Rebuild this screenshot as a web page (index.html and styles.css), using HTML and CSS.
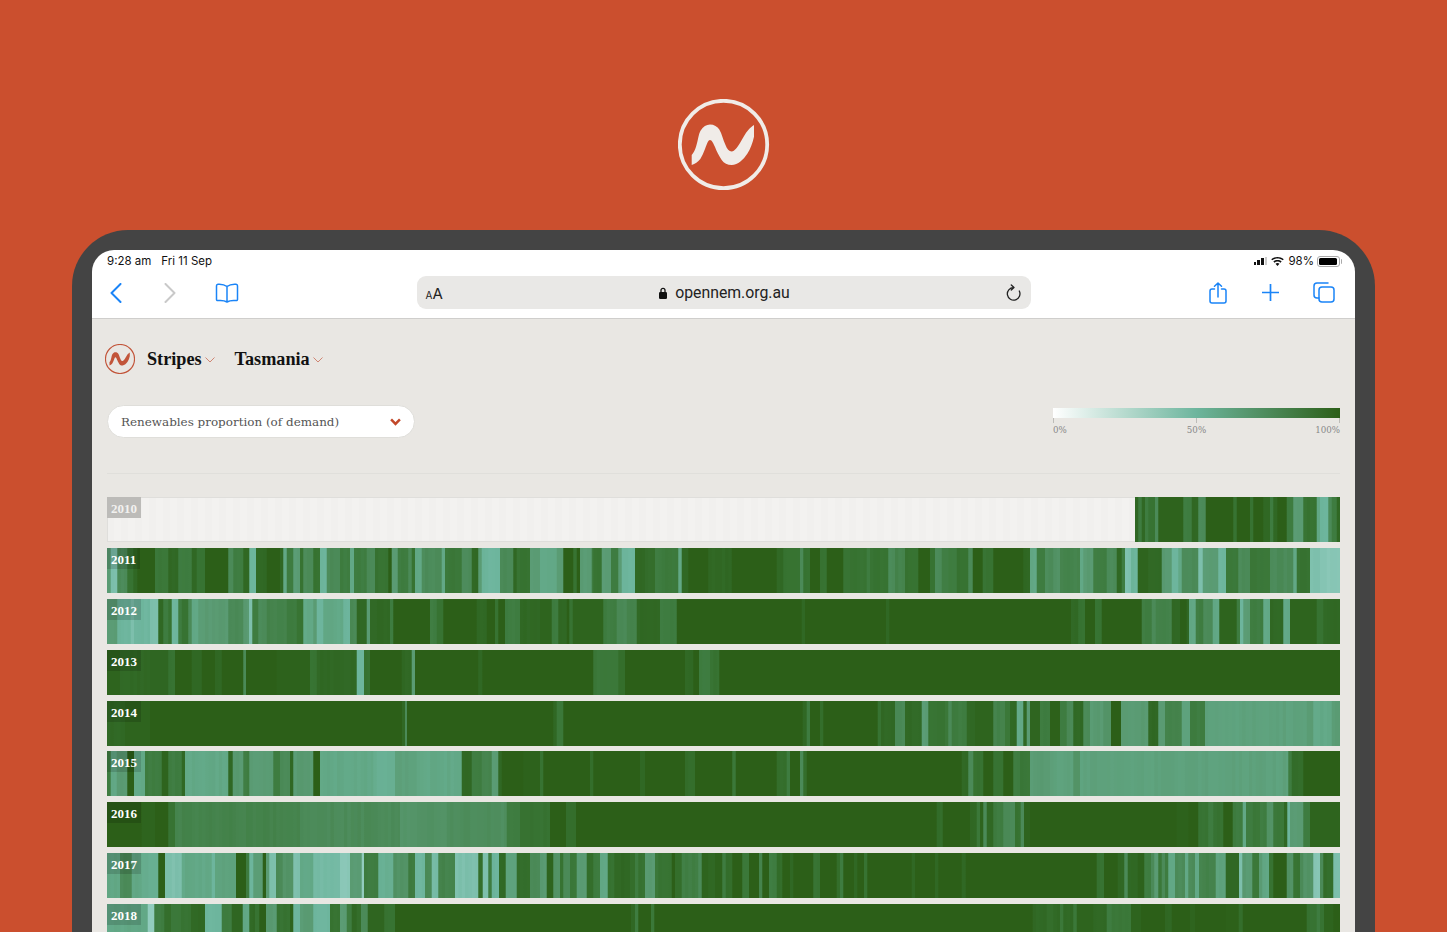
FILE: index.html
```html
<!DOCTYPE html>
<html lang="en">
<head>
<meta charset="utf-8">
<title>OpenNEM Stripes</title>
<link rel="stylesheet" href="styles.css">
</head>
<body>
<div class="hero">
  <svg class="hero-logo" viewBox="0 0 92 92" aria-hidden="true">
    <circle class="ring" cx="45.5" cy="45.5" r="43.7"/>
    <path class="wave" d="M13.7 56C16 53.5 17 50.5 18 47.7 20 42 20.500 35 22.500 31.700 25 27.500 28.500 25.500 32 25.500 36 25.500 39.500 27.500 41.300 30.500 44 35 45 41 47.500 46 49 50 51 52.500 53.700 52.500 56.500 52.500 59.500 48 62 44 65 39 67.500 34 70.300 31 72 29 74 27 76 26V37.700C74.500 44 72.500 50 69.300 54.800 65.500 60.500 60 66 53.700 66 49.500 66 46 64.500 43.700 61 41 57 38.500 52 37 48 35.500 44.500 33.800 41 32 41 30 41 28.500 46 27 50 25.500 54 24 57 22.300 60 20 63 17 65 13.700 66Z"/>
  </svg>
</div>
<div class="device">
  <div class="screen">
    <div class="status">
      <div class="status-left"><span>9:28 am</span><span>Fri 11 Sep</span></div>
      <div class="status-right">
        <span class="signal"><i></i><i></i><i></i><i></i></span>
        <svg class="wifi" viewBox="0 0 14 10" aria-hidden="true"><path d="M7 10 4.800 7.600C6.100 6.500 7.900 6.500 9.200 7.600ZM3.600 6.300 2.400 5C5 2.800 9 2.800 11.600 5L10.400 6.300C8.500 4.700 5.500 4.700 3.600 6.300ZM1.200 3.700 0 2.400C4-.8 10-.8 14 2.400L12.800 3.700C9.500 1.100 4.500 1.100 1.200 3.700Z"/></svg>
        <span>98%</span>
        <span class="battery"><b></b></span>
      </div>
    </div>
    <div class="toolbar">
      <div class="tools">
        <svg class="ico ico-nav" viewBox="0 0 12 20" aria-hidden="true"><path d="M10.500 1 1.500 10l9 9"/></svg>
        <svg class="ico ico-nav off" viewBox="0 0 12 20" aria-hidden="true"><path d="M1.500 1l9 9-9 9"/></svg>
        <svg class="ico ico-book" viewBox="0 0 24 20" aria-hidden="true"><path d="M12 3.500C9.500 1.500 6 1 3 1.200 2 1.300 1.500 1.800 1.500 2.800V16.500C1.500 17.300 2 17.700 3 17.600 6 17.300 9.500 17.500 12 19 14.500 17.500 18 17.300 21 17.600 22 17.700 22.500 17.300 22.500 16.500V2.800C22.500 1.800 22 1.300 21 1.200 18 1 14.500 1.500 12 3.500ZM12 3.500V19"/></svg>
      </div>
      <div class="address">
        <span class="aa"><small>A</small>A</span>
        <span class="url">
          <svg class="lock" viewBox="0 0 8 12" aria-hidden="true"><path class="shackle" d="M2 5.500V3.300a2 2 0 0 1 4 0V5.500"/><rect y="5" width="8" height="7" rx="1.300"/></svg>
          opennem.org.au
        </span>
        <svg class="reload" viewBox="0 0 16 18" aria-hidden="true"><path d="M13.300 7A6.300 6.300 0 1 1 7.500 3.500M5.300 1 8 3.500 5.300 6"/></svg>
      </div>
      <div class="tools tools-right">
        <svg class="ico ico-share" viewBox="0 0 18 22" aria-hidden="true"><path d="M5.500 7H3C1.800 7 1 7.800 1 9V19C1 20.200 1.800 21 3 21H15C16.200 21 17 20.200 17 19V9C17 7.800 16.200 7 15 7H12.500M9 15V1M5.500 4.300 9 1l3.500 3.300"/></svg>
        <svg class="ico ico-plus" viewBox="0 0 17 17" aria-hidden="true"><path d="M8.500 0V17M0 8.500H17"/></svg>
        <svg class="ico ico-tabs" viewBox="0 0 22 21" aria-hidden="true"><path d="M15 1H4C2 1 1 2 1 4V13C1 15 2 16 4 16H6"/><rect x="6" y="5" width="15" height="15" rx="3"/></svg>
      </div>
    </div>
    <main class="app">
      <header class="app-head">
        <svg class="app-logo" viewBox="0 0 92 92" aria-hidden="true">
          <circle class="ring" cx="46" cy="46" r="44.500"/>
          <path class="wave" d="M13.700 56C16 53.500 17 50.500 18 47.700 20 42 20.500 35 22.500 31.700 25 27.500 28.500 25.500 32 25.500 36 25.500 39.500 27.500 41.300 30.500 44 35 45 41 47.500 46 49 50 51 52.500 53.700 52.500 56.500 52.500 59.500 48 62 44 65 39 67.500 34 70.300 31 72 29 74 27 76 26V37.700C74.500 44 72.500 50 69.300 54.800 65.500 60.500 60 66 53.700 66 49.500 66 46 64.500 43.700 61 41 57 38.500 52 37 48 35.500 44.500 33.800 41 32 41 30 41 28.500 46 27 50 25.500 54 24 57 22.300 60 20 63 17 65 13.700 66Z"/>
        </svg>
        <nav class="crumbs">
          <span class="crumb">Stripes<svg viewBox="0 0 10 6" aria-hidden="true"><path d="M.5.500 5 5 9.500.500"/></svg></span>
          <span class="crumb">Tasmania<svg viewBox="0 0 10 6" aria-hidden="true"><path d="M.5.500 5 5 9.500.500"/></svg></span>
        </nav>
      </header>
      <section class="controls">
        <div class="select">
          <span>Renewables proportion (of demand)</span>
          <svg viewBox="0 0 10 7" aria-hidden="true"><path d="M1 1.200 5 5.200 9 1.200"/></svg>
        </div>
        <div class="legend">
          <div class="legend-bar"></div>
          <div class="legend-ticks"><i></i><i></i><i></i></div>
          <div class="legend-labels"><span>0%</span><span>50%</span><span>100%</span></div>
        </div>
      </section>
      <hr class="rule">
      <section class="years">
        <div class="year empty" data-year="2010"><div class="stripes"></div><span class="tag">2010</span></div>
        <div class="year" data-year="2011"><div class="stripes"></div><span class="tag">2011</span></div>
        <div class="year" data-year="2012"><div class="stripes"></div><span class="tag">2012</span></div>
        <div class="year" data-year="2013"><div class="stripes"></div><span class="tag">2013</span></div>
        <div class="year" data-year="2014"><div class="stripes"></div><span class="tag">2014</span></div>
        <div class="year" data-year="2015"><div class="stripes"></div><span class="tag">2015</span></div>
        <div class="year" data-year="2016"><div class="stripes"></div><span class="tag">2016</span></div>
        <div class="year" data-year="2017"><div class="stripes"></div><span class="tag">2017</span></div>
        <div class="year" data-year="2018"><div class="stripes"></div><span class="tag">2018</span></div>
      </section>
    </main>
  </div>
</div>
<script src="stripes.js"></script>
</body>
</html>
```
FILE: styles.css
```css
* { box-sizing: border-box; }
html, body { margin: 0; height: 932px; overflow: hidden; }
body { background: #cb4f2e; font-family: "Inter", "Liberation Sans", sans-serif; color: #111; }

.hero { height: 230px; padding-top: 99px; display: flex; justify-content: center; align-items: flex-start; }
.hero-logo { width: 92px; height: 92px; display: block; }
.hero-logo .ring { fill: none; stroke: #f0ece8; stroke-width: 3.8; }
.hero-logo .wave { fill: #f0ece8; }

.device { margin: 0 72px; height: 702px; padding: 20px 20px 0; background: #444; border-radius: 56px 56px 0 0; }
.screen { height: 100%; background: #fff; border-radius: 22px 22px 0 0; overflow: hidden; display: flex; flex-direction: column; }

.status { height: 22px; padding: 0 15px; flex: none; display: flex; justify-content: space-between; align-items: center; font-size: 11.5px; line-height: 22px; }
.status-left { display: flex; gap: 10px; }
.status-right { display: flex; align-items: center; gap: 3px; }
.signal { display: flex; align-items: flex-end; gap: 1px; height: 8px; margin-right: 1px; }
.signal i { width: 2.7px; background: #111; }
.signal i:nth-child(1) { height: 3px; }
.signal i:nth-child(2) { height: 5px; }
.signal i:nth-child(3) { height: 7px; }
.signal i:nth-child(4) { height: 8px; background: #ccc; }
.wifi { width: 13px; height: 9px; margin-right: 1px; fill: #111; }
.battery { width: 23px; height: 11px; margin-left: 0; padding: 1px; border: 1px solid #aaa; border-radius: 3px; position: relative; display: block; }
.battery b { display: block; width: 95%; height: 100%; background: #000; border-radius: 1.5px; }
.battery::after { content: ""; position: absolute; right: -3px; top: 2px; width: 1.5px; height: 5px; background: #aaa; border-radius: 0 1px 1px 0; }

.toolbar { height: 47px; flex: none; padding: 4px 15px 0; display: grid; grid-template-columns: 1fr 614px 1fr; align-items: start; border-bottom: 1px solid #cfcecc; }
.tools { display: flex; align-items: center; height: 33px; }
.tools-right { justify-content: flex-end; padding-right: 5px; }
.ico { display: block; fill: none; stroke: #1a84f7; stroke-width: 1.7; stroke-linecap: round; stroke-linejoin: round; }
.ico-nav { width: 12px; height: 20px; margin-left: 3px; margin-right: 39px; stroke-width: 2; }
.ico-nav.off { stroke: #c9c9c9; margin-left: 3px; }
.ico-book { width: 24px; height: 20px; margin-left: 0; stroke-width: 1.5; }
.ico-share { width: 18px; height: 22px; margin-right: 35px; stroke-width: 1.5; }
.ico-plus { width: 17px; height: 17px; margin-right: 34px; }
.ico-tabs { width: 22px; height: 21px; stroke-width: 1.5; }

.address { height: 33px; background: #e9e8e6; border-radius: 9px; padding: 0 9px; display: grid; grid-template-columns: 1fr auto 1fr; align-items: center; color: #222; }
.aa { font-size: 15px; line-height: 1; padding-top: 1px; }
.aa small { font-size: 10px; }
.url { display: flex; align-items: center; gap: 8px; padding-left: 2px; font-family: "Roboto", "Liberation Sans", sans-serif; font-size: 15.8px; }
.lock { width: 8px; height: 12px; fill: #111; }
.lock .shackle { fill: none; stroke: #111; stroke-width: 1.3; }
.reload { width: 16px; height: 18px; justify-self: end; fill: none; stroke: #222; stroke-width: 1.3; stroke-linecap: round; stroke-linejoin: round; }

.app { flex: 1; background: #e9e7e3; padding: 25px 15px 0; overflow: hidden; }
.app-head { display: flex; align-items: center; margin-left: -2px; height: 30px; }
.app-logo { width: 30px; height: 30px; }
.app-logo .ring { fill: none; stroke: #c2553a; stroke-width: 3.5; }
.app-logo .wave { fill: #c2553a; }
.crumbs { display: flex; gap: 20px; margin-left: 12px; }
.crumb { display: flex; align-items: center; gap: 3px; font-family: "Liberation Serif", serif; font-weight: 700; font-size: 18.2px; color: #111; }
.crumb svg { width: 10px; height: 6px; margin-top: 2px; fill: none; stroke: #cf8572; stroke-width: 1; }

.controls { display: flex; justify-content: space-between; align-items: flex-start; margin-top: 31px; }
.select { width: 308px; height: 33px; padding: 0 13px; background: #fff; border: 1px solid #dfdeda; border-radius: 17px; display: flex; justify-content: space-between; align-items: center; font-family: "DejaVu Serif", serif; font-size: 11.95px; color: #555; }
.select svg { width: 11px; height: 8px; fill: none; stroke: #c2482a; stroke-width: 2.3; }
.legend { width: 287px; padding-top: 3px; }
.legend-bar { height: 10px; background: linear-gradient(90deg, #fff 0%, #6db59d 50%, #2c5f18 100%); }
.legend-ticks { height: 5px; display: flex; justify-content: space-between; }
.legend-ticks i { width: 1px; background: #bdbcb8; }
.legend-labels { margin-top: 2px; display: grid; grid-template-columns: 1fr auto 1fr; font-family: "DejaVu Serif", serif; font-size: 8.7px; line-height: 10px; color: #888; }
.legend-labels span:last-child { text-align: right; }

.rule { height: 1px; border: 0; margin: 35px 0 23px; background: #e0dfdb; }

.years { display: flex; flex-direction: column; gap: 5.9px; margin-right: .5px; }
.year { height: 45px; flex: none; position: relative; overflow: hidden; background: repeating-linear-gradient(90deg, #f1f0ee 0 7px, #f3f2f0 7px 14px); }
.year.empty { box-shadow: inset 0 0 0 1px #dfdedb; }
.stripes { position: absolute; inset: 0; filter: blur(.5px); }
.tag { position: absolute; left: 0; top: 0; padding: 0 4px; height: 21px; line-height: 23px; background: rgba(0, 0, 0, .14); color: #fff; font-family: "Liberation Serif", serif; font-weight: 700; font-size: 13px; }
.empty .tag { background: #bcbbb8; color: #f2f1ef; }
```
FILE: stripes.js
```js
// Daily colour levels per year: "end:level" tokens in 1/3 px, each chunk relative to a screen-x origin.
var DATA = {
  2010: [[1040, "285:-1 295:1 305:3 315:1 325:3 345:2 355:4 430:.4 455:3 475:1 497:4 580:0 590:2 630:0 640:2 670:0 690:1 700:3 712:1 740:0 760:3 790:5 830:2 840:6 865:7 875:4 890:3 898:1"]],
  2011: [[100, "32:5 52:8 82:4 100:2 112:1 165:0 205:2.5 235:1 275:3 290:1 315:2 385:0 400:4 430:3 448:1 468:7 500:1 540:0 550:1 560:6 580:3 600:5 610:2 640:4 660:2 680:7 720:4 750:3 762:6 800:3 825:4 865:2 875:0 893:5 925:3 935:4 945:2 965:6 1025:4 1035:6 1085:2.5 1115:4 1135:1 1145:5 1200:7 1240:4 1250:1 1290:2 1320:5"],
         [530, "80:6 100:5 130:0 140:2 150:0 185:5 190:3 215:2 243:5 265:3 275:5 315:7 345:1 375:1.5 395:3 445:2.7 455:6 475:1 535:0 605:1 740:0 760:1 810:2 820:4 840:2 870:0 890:2 940:0 1010:2 1020:3 1075:2 1095:4 1125:3.5 1165:2 1200:0"],
         [930, "15:2 35:4 80:3 115:2 128:4 158:0 190:2 280:0 300:1 320:6 345:3 370:4 390:4.5 450:3.5 460:6 490:5 530:3 560:4 575:1 585:3 603:8 623:7 655:.5 695:1 725:5 745:7 755:6 805:4 818:8 865:5 888:7 925:2.5 960:4 1020:2.5 1090:4 1100:6 1140:2 1170:8 1228:8.5"]],
  2012: [[100, "52:5 92:7 102:8 150:7 175:8 190:1 205:3 215:2 235:7 245:3 265:2 275:4 295:6 385:5 430:4 447:5 457:8 475:3 500:4 560:3.5 590:3 610:2 640:6 650:5 670:7 730:6 750:7 770:4 800:1 810:5 870:1 880:3 990:0 1010:3 1030:2 1130:0 1160:1 1185:0 1195:2 1215:0 1260:3 1320:1"],
         [530, "65:.5 85:3 110:1 118:0 128:2 220:.5 260:3 290:4 320:3.5 390:1 440:3 815:0 825:1 1068:0 1078:1 1200:0"],
         [930, "423:0 445:1 465:2 495:0 515:2 635:0 665:3 677:4 725:3.5 750:1 770:0 777:1 797:6 820:3 848:4 868:6 920:.5 930:3 940:7 960:5 1000:3 1020:6 1060:1 1080:6 1160:.5 1180:2 1228:1"]],
  2013: [[100, "60:.5 150:1 205:.8 225:2 275:0 305:1 345:0 365:1 430:0 438:4 530:0 630:.3 650:2 770:1 792:7 810:2 905:0 935:1 945:5 1135:0 1147:1 1320:0"],
         [530, "190:0 265:2.5 285:1.5 465:0 490:1 507:0 540:3 568:2 1200:0"],
         [930, "1228:0"]],
  2014: [[100, "75:1 150:.5 906:0 915:1 921:4 1320:0"],
         [530, "70:0 80:1 100:2.5 818:0 830:1 840:3 870:0 880:1.5 1043:0 1053:2 1095:1 1125:4 1145:1 1175:1.2 1195:5 1200:2"],
         [930, "45:2 55:2.5 65:4 110:3 135:1 190:.5 225:3.5 240:2.5 260:1 280:6 290:1 300:5 330:.7 360:3 390:.2 410:3 430:4 460:1 480:4 520:5 543:4.5 573:0 655:5 685:1 705:5 755:3.5 780:5.5 825:3 1130:5.5 1150:5 1205:6 1228:5"]],
  2015: [[100, "32:3 50:6 82:5 102:0 135:6 185:3 205:.5 245:3 255:1 385:6 398:1 430:5 448:3 520:5 540:3 570:4 580:1 640:5 660:0 820:6 885:6.5 950:5.5 1085:6 1115:1 1145:3 1175:3.5 1195:5 1205:1 1270:0 1320:.3"],
         [530, "40:2 180:0 190:1.5 330:0 345:1 465:0 495:1.5 607:0 617:2.5 740:0 770:1.5 780:3 810:0 820:4 830:1.5 1200:0"],
         [930, "95:0 115:1 130:4 160:2 190:0 220:2 250:0 270:3 300:2.5 360:5 430:5.5 450:4.5 1075:5.5 1085:3 1120:1.5 1228:0"]],
  2016: [[100, "125:0 165:.5 205:0 225:2 600:3.5 900:4 1040:4.5 1220:4.2 1260:3 1320:2"],
         [530, "60:2 108:0 138:1.5 1200:0"],
         [930, "20:0 38:1.5 120:0 140:1 150:2.5 160:.5 170:4 190:1 220:3 255:4 272:2 282:4 300:.5 740:0 775:.3 805:0 835:2 850:3 880:2 908:0 938:3 948:6 968:3 990:2.5 1010:3 1030:4.5 1062:2.5 1072:1 1080:7 1120:5 1140:3 1228:.5"]],
  2017: [[100, "60:6 95:4 125:6 175:6.5 195:0 245:8 335:6 345:7 408:5.5 438:0 448:3 460:7 488:5 498:0 508:5 528:8 548:4 580:4.5 600:8 640:6 720:7.5 750:8.5 785:5 792:9 835:3 880:6.5 925:4.5 945:3 975:7 995:4 1015:7.5 1065:3.5 1135:8 1148:1.5 1165:8 1175:3 1197:7 1217:1 1250:5.5 1290:1.5 1320:4"],
         [530, "50:5 70:.5 90:4.5 100:2 120:4 140:2.5 170:5 190:1.5 210:3 233:6 253:2 300:1 315:1.5 325:3 345:2 375:5 385:2.5 425:2 435:0 455:1.5 505:3.2 515:4 535:.5 555:1 577:.3 587:3 607:1.5 637:0 657:2.5 687:0 697:3.5 717:0 740:3 757:1.5 780:0 790:1 850:0 870:2 920:0 930:1.5 940:3 972:0 982:1 1002:0 1012:2 1145:0 1155:1 1200:0"],
         [930, "15:0 25:1 95:0 107:1 500:0 522:2 563:0 583:1 593:4 623:1 643:.3 663:3 673:4 685:5 695:2.5 705:4 715:3 735:6 765:4 775:6 795:4 807:6 857:3.5 887:5.5 927:1 937:8 967:5 987:2.5 997:5 1017:6 1030:2 1070:0 1090:4.5 1110:2 1120:4 1150:4.5 1170:8.5 1180:4 1210:1.5 1228:8"]],
  2018: [[100, "143:6 163:9 193:3 213:1.5 243:2.5 273:2 315:1 365:7 395:3 428:.8 448:6 465:1 478:2 498:0 530:5 570:2 580:.5 600:7 640:5 690:7 720:2 740:5 755:3 770:1 783:1.5 803:4 853:.7 885:2 1320:0"],
         [530, "303:0 315:1 325:3 363:0 373:2.5 1200:0"],
         [930, "308:0 350:1 370:1.5 390:1 400:2.5 430:1 440:2.5 490:.5 530:1 545:3 603:2.5 633:.5 705:0 725:1 780:0 795:.5 888:0 926:.2 938:1.5 1130:0 1160:2 1170:3 1182:2 1210:.5 1228:0"]]
};
var RAMP = [[44,95,24],[48,104,36],[55,115,50],[62,124,64],[75,138,88],[90,155,115],[98,168,134],[109,181,157],[125,191,172],[146,204,190]];
var LEFT = 107, WIDTH = 1233, DAY = 100 / 365, SOFT = 0.03;
var seed = 7;

function noise() {
  seed = (seed * 16807) % 2147483647;
  return (seed % 1000) / 1000 - 0.5;
}

function colour(level) {
  if (level < 0) return "transparent";
  level = Math.max(0, Math.min(9, level));
  var i = Math.min(Math.floor(level), 8), f = level - i, a = RAMP[i], b = RAMP[i + 1];
  return "rgb(" + [0, 1, 2].map(function (k) { return Math.round(a[k] + (b[k] - a[k]) * f); }).join(",") + ")";
}

document.querySelectorAll(".year").forEach(function (row) {
  var at = 0, stops = [];
  function push(level, from, to) {
    var c = colour(level), d = Math.min(SOFT, (to - from) / 3);
    stops.push(c + " " + (from + d).toFixed(3) + "% " + (to - d).toFixed(3) + "%");
  }
  DATA[row.dataset.year].forEach(function (chunk) {
    chunk[1].split(" ").forEach(function (token) {
      var parts = token.split(":");
      var end = ((chunk[0] + parts[0] / 3 - LEFT) / WIDTH) * 100;
      if (end <= at) return;
      var level = parseFloat(parts[1]);
      // long runs of partly renewable days break into slightly varying daily stripes
      while (level >= 1 && end - at > DAY * 1.5) {
        push(level + noise() * 0.35, at, at + DAY);
        at += DAY;
      }
      push(level, at, end);
      at = end;
    });
  });
  row.querySelector(".stripes").style.backgroundImage = "linear-gradient(90deg," + stops.join(",") + ")";
});
```
